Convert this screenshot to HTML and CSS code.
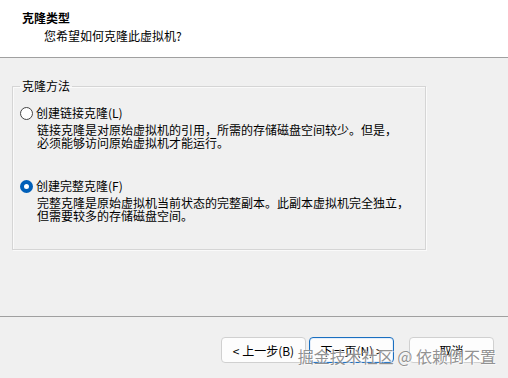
FILE: index.html
```html
<!DOCTYPE html>
<html lang="zh-CN">
<head>
<meta charset="utf-8">
<link rel="stylesheet" href="styles.css">
</head>
<body>
<div class="dialog">
  <header class="header">
    <div class="title">克隆类型</div>
    <div class="subtitle">您希望如何克隆此虚拟机?</div>
  </header>
  <main class="main">
    <fieldset class="group">
      <legend class="legend">克隆方法</legend>
      <div class="option">
        <div class="opt-row"><span class="radio"></span><span class="opt-label">创建链接克隆(L)</span></div>
        <div class="opt-desc">链接克隆是对原始虚拟机的引用，所需的存储磁盘空间较少。但是，<br>必须能够访问原始虚拟机才能运行。</div>
      </div>
      <div class="option option-2">
        <div class="opt-row"><span class="radio checked"></span><span class="opt-label">创建完整克隆(F)</span></div>
        <div class="opt-desc">完整克隆是原始虚拟机当前状态的完整副本。此副本虚拟机完全独立，<br>但需要较多的存储磁盘空间。</div>
      </div>
    </fieldset>
  </main>
  <footer class="footer">
    <div class="btn-pair">
      <button class="btn">&lt; 上一步(B)</button>
      <button class="btn btn-primary">下一页(N) &gt;</button>
    </div>
    <button class="btn">取消</button>
    <div class="watermark">掘金技术社区 @ 依赖倒不置</div>
  </footer>
</div>
</body>
</html>
```
FILE: styles.css
```css
* { box-sizing: border-box; }
html, body {
  margin: 0;
  padding: 0;
  background: #f0f0f0;
}
body {
  font-family: "Noto Sans CJK SC", "Noto Sans", sans-serif;
  font-size: 12px;
  color: #000;
}
.dialog {
  width: 508px;
  height: 378px;
  display: flex;
  flex-direction: column;
  position: relative;
  overflow: hidden;
}
.header {
  height: 58px;
  background: #fff;
  border-bottom: 1px solid #a0a0a0;
  padding: 11px 0 0 22px;
  flex: none;
}
.title {
  font-weight: bold;
  line-height: 14px;
}
.subtitle {
  margin: 4px 0 0 22px;
  line-height: 14px;
}
.main {
  height: 258px;
  flex: none;
  padding: 21px 0 0 12px;
}
.group {
  width: 414px;
  margin: 0;
  padding: 13px 0 27px 7px;
  border: 1px solid #d5d5d5;
  box-shadow: inset 1px 1px 0 #fafafa, 1px 1px 0 #fafafa;
}
.legend {
  padding: 0 2px;
  line-height: 14px;
}
.option-2 { margin-top: 30px; }
.opt-row {
  display: flex;
  align-items: center;
  height: 14px;
  margin-left: 0;
}
.radio {
  width: 13px;
  height: 13px;
  border-radius: 50%;
  border: 1px solid #444;
  background: #fff;
  flex: none;
}
.radio.checked {
  border: 4px solid #005fb8;
  background: #fff;
}
.opt-label {
  margin-left: 3px;
  line-height: 14px;
}
.opt-desc {
  margin: 3px 0 0 17px;
  line-height: 13px;
}
.footer {
  flex: 1;
  border-top: 1px solid #a0a0a0;
  display: flex;
  justify-content: flex-end;
  align-items: flex-start;
  padding: 20px 14px 0 0;
  gap: 15px;
  position: relative;
}
.btn-pair {
  display: flex;
  gap: 3px;
}
.btn {
  width: 85px;
  height: 26px;
  border: 1px solid #d0d0d0;
  border-radius: 4px;
  background: #fdfdfd;
  font-family: "Noto Sans CJK SC", "Noto Sans", sans-serif;
  font-size: 12px;
  color: #000;
  padding: 0;
}
.btn-primary {
  border: 1px solid #1a6fc0;
  box-shadow: inset 0 0 0 1px #e4eefa;
}
.watermark {
  position: absolute;
  right: 12px;
  bottom: 12px;
  font-size: 16px;
  line-height: 20px;
  color: rgba(110, 110, 110, 0.75);
  text-shadow: 0 0 1px #fff, 1px 1px 0 rgba(255,255,255,0.6);
  white-space: nowrap;
}
```
